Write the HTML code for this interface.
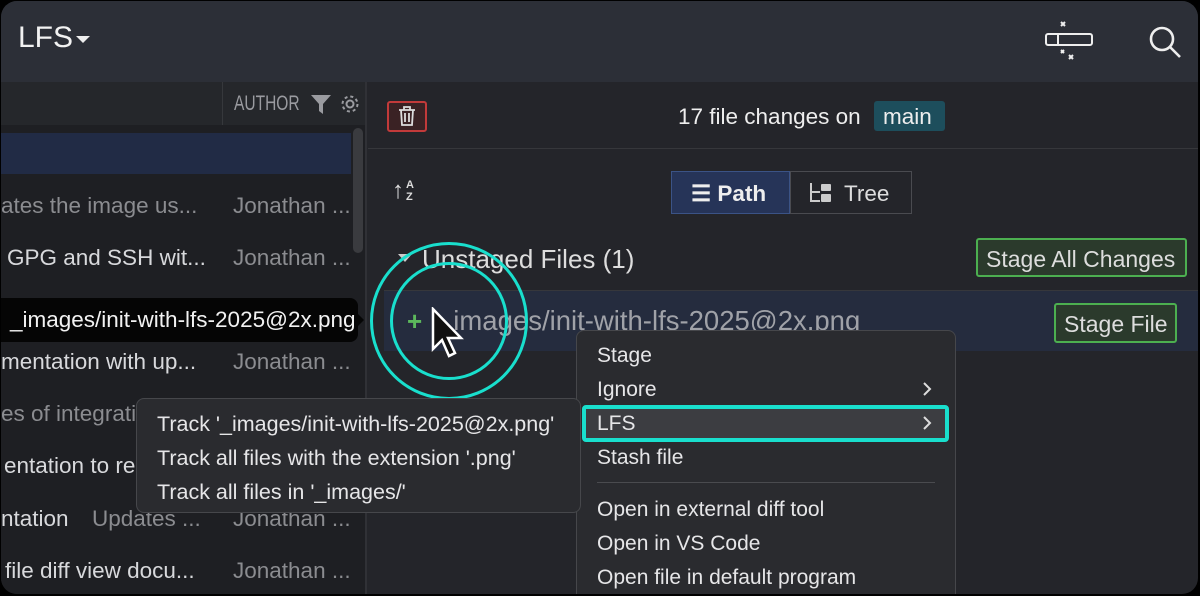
<!DOCTYPE html>
<html><head><meta charset="utf-8"><style>
*{margin:0;padding:0;box-sizing:border-box}
body{width:1200px;height:596px;background:#000;font-family:"Liberation Sans",sans-serif;overflow:hidden;position:relative}
.win{position:absolute;left:1px;top:1px;width:1197px;height:593px;border-radius:16px;overflow:hidden;background:#24252a}
.hdr{position:absolute;left:0;top:0;width:100%;height:81px;background:#2c2f37}
.abs{position:absolute}
.t{position:absolute;white-space:nowrap;font-size:22.5px}
.left{position:absolute;left:0;top:81px;width:366px;height:520px;background:#1e1f23;border-right:2px solid #303136}
.g{color:#8b8c90}.w{color:#d8d9dc}
.menu{position:absolute;background:#2a2b2f;border:1px solid #46474b;border-radius:8px}
.mi{position:absolute;left:20px;color:#e6e6e8;font-size:21px;white-space:nowrap}
.chev{position:absolute;left:345px}
</style></head><body>
<div class="win">
 <div class="hdr">
  <div class="t" style="left:17px;top:20px;font-size:30px;color:#f2f2f2">LFS</div>
  <div class="abs" style="left:75px;top:35px;width:0;height:0;border-left:7px solid transparent;border-right:7px solid transparent;border-top:7px solid #eee"></div>
  <svg class="abs" style="left:1040px;top:18px" width="56" height="50" viewBox="0 0 56 50" fill="none" stroke="#eee" stroke-width="2"><rect x="5" y="15" width="46" height="11" rx="2"/><line x1="17" y1="15" x2="17" y2="26"/><path d="M20 3l4 4M24 3l-4 4M22 4v2M20 31l3 3M23 31l-3 3M28 36l4 4M32 36l-4 4"/></svg>
  <svg class="abs" style="left:1147px;top:24px" width="36" height="36" viewBox="0 0 36 36" fill="none" stroke="#eee" stroke-width="2.6"><circle cx="14" cy="14" r="11"/><line x1="22" y1="22" x2="32" y2="32"/></svg>
 </div>
 <div class="left">
  <div class="abs" style="left:0;top:0;width:364px;height:43px;background:#25272b"></div>
  <div class="abs" style="left:221px;top:0;width:1px;height:43px;background:#36383c"></div>
  <div class="t" style="left:233px;top:10px;font-size:21px;color:#9a9ba0;transform:scaleX(0.74);transform-origin:left">AUTHOR</div>
  <svg class="abs" style="left:309px;top:11px" width="22" height="22" viewBox="0 0 22 22"><path d="M1 2h20l-8 9v10l-4-3v-7z" fill="#9a9ba0"/></svg>
  <svg class="abs" style="left:338px;top:11px" width="22" height="22" viewBox="0 0 22 22" fill="none" stroke="#9a9ba0" stroke-width="2"><circle cx="11" cy="11" r="3.5"/><circle cx="11" cy="11" r="7.5" stroke-dasharray="3 2.9"/></svg>
  <div class="abs" style="left:0;top:51px;width:350px;height:41px;background:#212b45"></div>
  <div class="abs" style="left:352px;top:46px;width:10px;height:125px;background:#3a3b3f;border-radius:5px"></div>
  <div class="t g" style="left:0;top:111px">ates the image us...</div><div class="t g" style="left:232px;top:111px">Jonathan ...</div>
  <div class="t w" style="left:6px;top:163px">GPG and SSH wit...</div><div class="t g" style="left:232px;top:163px">Jonathan ...</div>
  <div class="t g" style="left:6px;top:215px">with new screens</div><div class="t g" style="left:232px;top:215px">Jonathan</div>
  <div class="t w" style="left:0;top:267px">mentation with up...</div><div class="t g" style="left:232px;top:267px">Jonathan ...</div>
  <div class="t g" style="left:0;top:319px">es of integration</div>
  <div class="t w" style="left:3px;top:371px">entation to re</div>
  <div class="t w" style="left:0;top:424px">ntation</div><div class="t g" style="left:91px;top:424px">Updates ...</div><div class="t g" style="left:232px;top:424px">Jonathan ...</div>
  <div class="t w" style="left:4px;top:476px">file diff view docu...</div><div class="t g" style="left:232px;top:476px">Jonathan ...</div>
 </div>
 <div class="abs" style="left:0;top:297px;width:357px;height:44px;background:#050505;border-radius:0 8px 8px 0"></div>
 <div class="abs" style="left:356px;top:312px;width:0;height:0;border-top:7px solid transparent;border-bottom:7px solid transparent;border-left:7px solid #050505"></div>
 <div class="t" style="left:9px;top:306px;color:#f2f2f2">_images/init-with-lfs-2025@2x.png</div>
 <!-- right -->
 <div class="abs" style="left:386px;top:100px;width:40px;height:31px;background:#3a2224;border:2px solid #c23a3a;border-radius:3px"></div>
 <svg class="abs" style="left:396px;top:104px" width="20" height="22" viewBox="0 0 20 22" fill="none" stroke="#ddd" stroke-width="1.8"><path d="M2 5h16M7 5V2h6v3M4 5l1 15h10l1-15M8 8v9M12 8v9"/></svg>
 <div class="t" style="left:677px;top:103px;color:#eee">17 file changes on</div>
 <div class="abs" style="left:873px;top:100px;width:71px;height:30px;background:#1d4e5c;border-radius:3px"></div>
 <div class="t" style="left:882px;top:103px;color:#eee">main</div>
 <div class="abs" style="left:367px;top:147px;width:833px;height:1px;background:#36373b"></div>
 <div class="t" style="left:391px;top:176px;font-size:24px;color:#ddd">↑</div>
 <div class="t" style="left:405px;top:178px;font-size:11px;color:#ddd;font-weight:bold;line-height:12px">A<br>Z</div>
 <div class="abs" style="left:670px;top:170px;width:119px;height:43px;background:#263458;border:1px solid #3b5386"></div>
 <div class="abs" style="left:789px;top:170px;width:122px;height:43px;border:1px solid #4a4b50"></div>
 <div class="t" style="left:690px;top:180px;color:#eee;font-weight:bold">☰ Path</div>
 <svg class="abs" style="left:808px;top:181px" width="26" height="22" viewBox="0 0 26 22" fill="#ccc"><path d="M1 1h2v17h8v2H1z" /><rect x="12" y="2" width="10" height="7" rx="1"/><rect x="12" y="12" width="10" height="8" rx="1"/><rect x="3" y="9" width="8" height="2"/></svg>
 <div class="t" style="left:843px;top:180px;color:#ddd">Tree</div>
 <div class="abs" style="left:397px;top:253px;width:0;height:0;border-left:7px solid transparent;border-right:7px solid transparent;border-top:8px solid #ccc"></div>
 <div class="t" style="left:421px;top:243px;font-size:26px;color:#ddd">Unstaged Files (1)</div>
 <div class="abs" style="left:975px;top:237px;width:211px;height:39px;background:#2b3a2c;border:2px solid #4caf50;border-radius:3px"></div>
 <div class="t" style="left:985px;top:245px;font-size:23px;color:#ddd">Stage All Changes</div>
 <div class="abs" style="left:383px;top:289px;width:817px;height:61px;background:#252c3e"></div>
 <div class="abs" style="left:383px;top:289px;width:817px;height:1px;background:#36373b"></div>
 <div class="t" style="left:406px;top:305px;font-size:26px;color:#5cb85c;font-weight:bold">+</div>
 <div class="t" style="left:437px;top:304px;font-size:27.5px;color:#a0a2a8">_images/init-with-lfs-2025@2x.png</div>
 <div class="abs" style="left:1053px;top:302px;width:123px;height:40px;background:#2b3a2c;border:2px solid #4caf50;border-radius:3px"></div>
 <div class="t" style="left:1063px;top:310px;font-size:23px;color:#ddd">Stage File</div>
 <!-- circles -->
 <div class="abs" style="left:369px;top:241px;width:158px;height:158px;border:3px solid #19dfcd;border-radius:50%"></div>
 <div class="abs" style="left:389px;top:261px;width:118px;height:118px;border:3px solid #19dfcd;border-radius:50%"></div>
 <svg class="abs" style="left:430px;top:306px" width="36" height="56" viewBox="0 0 36 56"><path d="M2 2v40l9-9 7 16 6-3-7-15h13z" fill="#111" stroke="#fff" stroke-width="2.5"/></svg>
 <!-- context menu -->
 <div class="menu" style="left:575px;top:329px;width:380px;height:290px">
  <div class="mi" style="top:13px">Stage</div>
  <div class="mi" style="top:47px">Ignore</div>
  <svg class="chev" style="top:50px" width="10" height="16" viewBox="0 0 10 16" fill="none" stroke="#ddd" stroke-width="2"><path d="M2 2l6 6-6 6"/></svg>
  <div class="abs" style="left:5px;top:74px;width:367px;height:37px;background:#3c3d41;border:4px solid #19dfcd;border-radius:4px"></div>
  <div class="mi" style="top:81px">LFS</div>
  <svg class="chev" style="top:84px" width="10" height="16" viewBox="0 0 10 16" fill="none" stroke="#ddd" stroke-width="2"><path d="M2 2l6 6-6 6"/></svg>
  <div class="mi" style="top:115px">Stash file</div>
  <div class="abs" style="left:20px;top:151px;width:338px;height:1px;background:#4a4b4f"></div>
  <div class="mi" style="top:167px">Open in external diff tool</div>
  <div class="mi" style="top:201px">Open in VS Code</div>
  <div class="mi" style="top:235px">Open file in default program</div>
 </div>
 <div class="menu" style="left:135px;top:397px;width:445px;height:115px">
  <div class="mi" style="top:13px;font-size:21.5px">Track '_images/init-with-lfs-2025@2x.png'</div>
  <div class="mi" style="top:47px;font-size:21.5px">Track all files with the extension '.png'</div>
  <div class="mi" style="top:81px;font-size:21.5px">Track all files in '_images/'</div>
 </div>
</div>
</body></html>
